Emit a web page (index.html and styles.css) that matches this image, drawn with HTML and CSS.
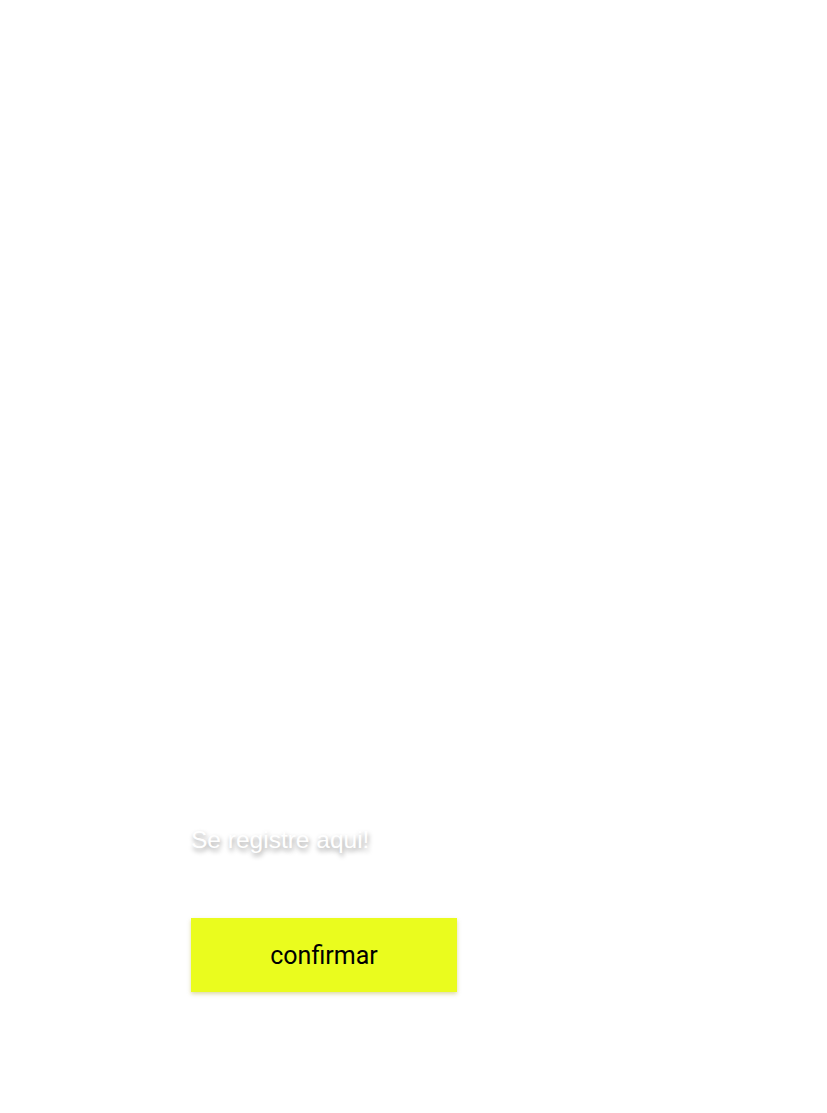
FILE: index.html
```html
<!DOCTYPE html>
<html lang="pt">
<head>
<meta charset="utf-8">
<title>Registro</title>
<link rel="stylesheet" href="styles.css">
</head>
<body>
<main class="page">
  <form class="form">
    <h1 class="title">Se registre aqui!</h1>
    <button type="button" class="confirm">confirmar</button>
  </form>
</main>
</body>
</html>
```
FILE: styles.css
```css
html, body {
  margin: 0;
  padding: 0;
  background: #ffffff;
}
.page {
  min-height: 1113px;
  padding-left: 191px;
  padding-top: 822px;
  box-sizing: border-box;
}
.form {
  display: flex;
  flex-direction: column;
  align-items: flex-start;
}
.title {
  margin: 0;
  font-family: "Liberation Sans", Arial, sans-serif;
  font-weight: normal;
  font-size: 24.5px;
  line-height: 36px;
  color: #ffffff;
  text-shadow: 1px 3px 5px rgba(0, 0, 0, 0.4);
}
.confirm {
  margin-top: 60px;
  width: 266px;
  height: 74px;
  border: none;
  padding: 0;
  background: #eafc1e;
  color: #000000;
  font-family: Roboto, sans-serif;
  font-size: 25px;
  box-shadow: 0 2px 4px rgba(160, 150, 0, 0.35);
}
```
